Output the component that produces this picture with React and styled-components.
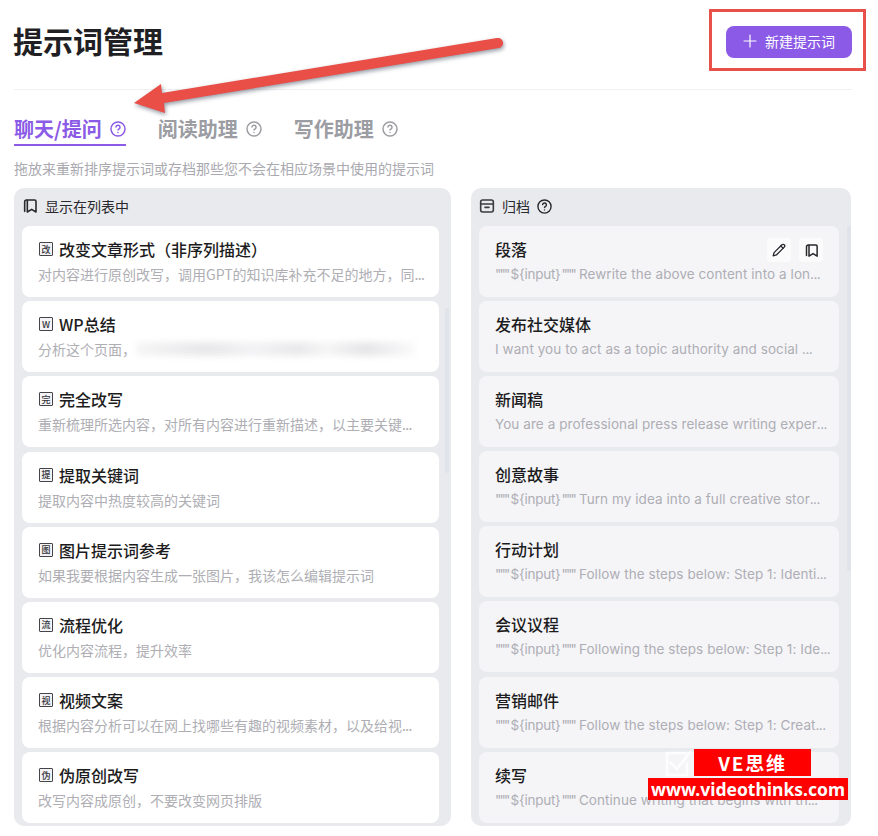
import React from "react";
import styled, { createGlobalStyle } from "styled-components";

const Global = createGlobalStyle`
  html, body { margin: 0; padding: 0; background: #fff; }
  body { width: 878px; height: 836px; overflow: hidden; font-family: "Noto Sans CJK SC", sans-serif; }
  * { box-sizing: border-box; }
`;
const CJK = `"Noto Sans CJK SC", sans-serif`;
const LATIN = `Inter, "Noto Sans CJK SC", sans-serif`;

const Page = styled.div`
  position: relative;
  width: 878px;
  height: 836px;
  padding: 0 26px 0 14px;
  overflow: hidden;
  font-family: ${CJK};
`;
const Header = styled.header`
  display: flex;
  align-items: center;
  justify-content: space-between;
  height: 90px;
  padding-top: 6px;
  padding-bottom: 11px;
  border-bottom: 1px solid #f0f0f2;
`;
const Title = styled.h1`
  margin: -4px 0 0 -1px;
  font-size: 30px;
  line-height: 40px;
  font-weight: 700;
  color: #1f1f24;
`;
const NewButton = styled.button`
  width: 126px;
  height: 32px;
  display: flex;
  align-items: center;
  justify-content: center;
  gap: 8px;
  border: 0;
  padding: 0 0 2px;
  border-radius: 8px;
  background: #8b5ae6;
  color: #fff;
  font-family: ${CJK};
  font-size: 14px;
`;
const Tabs = styled.nav`
  display: flex;
  gap: 32px;
  padding-top: 26px;
`;
const Tab = styled.div`
  display: flex;
  align-items: center;
  gap: 8px;
  height: 30px;
  padding-bottom: 3px;
  font-size: 20px;
  font-weight: 700;
  color: ${p => (p.$active ? "#8b5ae6" : "#9c9ca3")};
  border-bottom: 2px solid ${p => (p.$active ? "#8b5ae6" : "transparent")};
`;
const Hint = styled.p`
  margin: 13px 0 0;
  font-size: 14px;
  line-height: 18px;
  color: #a9a9af;
`;
const Columns = styled.div`
  display: grid;
  grid-template-columns: 437px 380px;
  gap: 20px;
  margin-top: 11px;
`;
const Panel = styled.section`
  position: relative;
  height: 638px;
  padding: 0 8px;
  border-radius: 10px;
  background: #e9eaee;
  overflow: hidden;
`;
const PanelHead = styled.div`
  display: flex;
  align-items: center;
  gap: 7px;
  height: 38px;
  padding-bottom: 2px;
  font-size: 14px;
  color: #28282d;
`;
const List = styled.div`
  display: flex;
  flex-direction: column;
  gap: ${p => p.$gap}px;
  width: ${p => p.$w}px;
`;
const Card = styled.article`
  position: relative;
  height: 71px;
  padding: 11px 16px 0;
  border-radius: 8px;
  background: ${p => (p.$muted ? "#f5f5f8" : "#fff")};
`;
const CardTitle = styled.div`
  display: flex;
  align-items: center;
  gap: 6px;
  height: 24px;
  font-size: 16px;
  font-weight: 500;
  color: #1c1c20;
`;
const CharIcon = styled.span`
  width: 14px;
  height: 14px;
  display: flex;
  align-items: center;
  justify-content: center;
  flex: none;
  margin-left: 1px;
  border: 1px solid #44444a;
  border-radius: 1px;
  background: #f4f4f6;
  font-size: 9px;
  line-height: 1;
  font-weight: 500;
  color: #33333a;
`;
const Desc = styled.div`
  display: flex;
  align-items: center;
  height: 22px;
  margin-top: 2px;
  font-size: 14px;
  color: #aeaeb4;
  white-space: nowrap;
`;
const LatinDesc = styled.span`
  font-family: ${LATIN};
  font-size: 13.5px;
  letter-spacing: 0.07px;
`;
const Quote = styled.span`
  letter-spacing: -1.8px;
`;
const InputVar = styled.span`
  letter-spacing: -0.25px;
  margin: 0 1px 0 2px;
`;
const Dots = styled.span`
  letter-spacing: -0.6px;
`;
const Redacted = styled.span`
  flex: none;
  width: 280px;
  height: 14px;
  background: linear-gradient(90deg, #f6f6f7 0%, #e8e8ea 25%, #f3f3f5 42%, #e9e9eb 58%, #f6f6f7 68%, #e6e6e8 82%, #fbfbfc 100%);
  filter: blur(3px);
`;
const CardActions = styled.div`
  position: absolute;
  top: 12px;
  right: 16px;
  display: flex;
  gap: 8px;
`;
const ActionBtn = styled.span`
  width: 24px;
  height: 24px;
  display: flex;
  align-items: center;
  justify-content: center;
  border-radius: 4px;
  background: #fbfbfc;
  color: #28282d;
`;
const ScrollThumb = styled.div`
  position: absolute;
  width: 4px;
  border-radius: 2px;
  background: #e0e3e9;
  right: ${p => p.$right}px;
  top: ${p => p.$top}px;
  height: ${p => p.$h}px;
`;
const RedFrame = styled.div`
  position: absolute;
  left: 709px;
  top: 9px;
  width: 157px;
  height: 62px;
  border: 3px solid #e8504a;
`;
const ArrowSvg = styled.svg`
  position: absolute;
  left: 120px;
  top: 25px;
  overflow: visible;
  filter: drop-shadow(1px 2px 2px rgba(60, 70, 90, 0.55));
`;
const Watermark = styled.div`
  position: absolute;
  left: 648px;
  top: 749px;
  width: 200px;
  height: 52px;
`;
const WmCheck = styled.svg`
  position: absolute;
  left: 17px;
  top: 0;
`;
const WmBrand = styled.div`
  position: absolute;
  left: 46px;
  top: 0;
  width: 117px;
  height: 27px;
  display: flex;
  align-items: center;
  justify-content: center;
  background: #fe0000;
  color: #fff;
  font-family: ${CJK};
  font-size: 19px;
  font-weight: 700;
  letter-spacing: 1.8px;
`;
const WmUrl = styled.div`
  position: absolute;
  left: 0;
  top: 29px;
  width: 200px;
  height: 22px;
  display: flex;
  align-items: center;
  justify-content: center;
  background: #fe0000;
  color: #fff;
  font-family: "Noto Sans", sans-serif;
  font-size: 17.5px;
  font-weight: 700;
  white-space: nowrap;
`;

const Help = ({ size = 16, sw = 2.2 }) => (
  <svg width={size} height={size} viewBox="0 0 24 24" fill="none" stroke="currentColor" strokeWidth={sw} strokeLinecap="round" strokeLinejoin="round">
    <circle cx="12" cy="12" r="10.5" />
    <path d="M9 9a3 3 0 0 1 6 .8c0 2-3 2.6-3 3.7" />
    <path d="M12 17.4h.01" />
  </svg>
);
const Copies = ({ size = 16 }) => (
  <svg width={size} height={size} viewBox="0 0 24 24" fill="none" stroke="currentColor" strokeWidth="2.4" strokeLinecap="round" strokeLinejoin="round">
    <path d="M8 3h11a2 2 0 0 1 2 2v16l-6.5-4L8 21V3" />
    <path d="M4 20V6a3 3 0 0 1 3-3" />
  </svg>
);
const Archive = () => (
  <svg width="16" height="16" viewBox="0 0 24 24" fill="none" stroke="#3a3a40" strokeWidth="2.4" strokeLinecap="round" strokeLinejoin="round">
    <rect x="2.5" y="3" width="19" height="18" rx="3" />
    <path d="M2.5 9h19" />
    <path d="M9 14h6" />
  </svg>
);
const Pencil = () => (
  <svg width="14" height="14" viewBox="0 0 24 24" fill="none" stroke="currentColor" strokeWidth="2.2" strokeLinecap="round" strokeLinejoin="round">
    <path d="M17 3a2.8 2.8 0 0 1 4 4L7.5 20.5 2 22l1.5-5.5Z" />
    <path d="m15 5 4 4" />
  </svg>
);
const Plus = () => (
  <svg width="14" height="14" viewBox="0 0 14 14" fill="none" stroke="#fff" strokeWidth="1.2" strokeLinecap="round">
    <path d="M7 1v12M1 7h12" />
  </svg>
);

const left = [
  { icon: "改", title: "改变文章形式（非序列描述）", desc: "对内容进行原创改写，调用GPT的知识库补充不足的地方，同", more: true },
  { icon: "W", title: "WP总结", desc: "分析这个页面，", redacted: true },
  { icon: "完", title: "完全改写", desc: "重新梳理所选内容，对所有内容进行重新描述，以主要关键", more: true },
  { icon: "提", title: "提取关键词", desc: "提取内容中热度较高的关键词" },
  { icon: "图", title: "图片提示词参考", desc: "如果我要根据内容生成一张图片，我该怎么编辑提示词" },
  { icon: "流", title: "流程优化", desc: "优化内容流程，提升效率" },
  { icon: "视", title: "视频文案", desc: "根据内容分析可以在网上找哪些有趣的视频素材，以及给视", more: true },
  { icon: "伪", title: "伪原创改写", desc: "改写内容成原创，不要改变网页排版" },
];
const right = [
  { title: "段落", desc: "Rewrite the above content into a lon", quoted: true },
  { title: "发布社交媒体", desc: "I want you to act as a topic authority and social " },
  { title: "新闻稿", desc: "You are a professional press release writing exper" },
  { title: "创意故事", desc: "Turn my idea into a full creative stor", quoted: true },
  { title: "行动计划", desc: "Follow the steps below: Step 1: Identi", quoted: true },
  { title: "会议议程", desc: "Following the steps below: Step 1: Ide", quoted: true },
  { title: "营销邮件", desc: "Follow the steps below: Step 1: Creat", quoted: true },
  { title: "续写", desc: "Continue writing that begins with th", quoted: true },
];
const QUOTES = '"""';

export default function App() {
  return (
    <Page>
      <Global />
      <Header>
        <Title>提示词管理</Title>
        <NewButton><Plus />新建提示词</NewButton>
      </Header>
      <Tabs>
        <Tab $active>聊天/提问<Help /></Tab>
        <Tab>阅读助理<Help /></Tab>
        <Tab>写作助理<Help /></Tab>
      </Tabs>
      <Hint>拖放来重新排序提示词或存档那些您不会在相应场景中使用的提示词</Hint>
      <Columns>
        <Panel>
          <PanelHead><Copies />显示在列表中</PanelHead>
          <List $w={417} $gap={4.2}>
            {left.map(item => (
              <Card key={item.title}>
                <CardTitle><CharIcon>{item.icon}</CharIcon>{item.title}</CardTitle>
                <Desc>
                  <span>{item.desc}{item.more && <Dots>...</Dots>}</span>
                  {item.redacted && <Redacted />}
                </Desc>
              </Card>
            ))}
          </List>
          <ScrollThumb $right={2} $top={120} $h={165} />
        </Panel>
        <Panel>
          <PanelHead><Archive />归档<Help size={15} /></PanelHead>
          <List $w={360} $gap={4.1}>
            {right.map((item, i) => (
              <Card key={item.title} $muted>
                <CardTitle>{item.title}</CardTitle>
                <Desc>
                  <LatinDesc>
                    {item.quoted && (
                      <>
                        <Quote>{QUOTES}</Quote>
                        <InputVar>{"${input}"}</InputVar>
                        <Quote>{QUOTES}</Quote>{" "}
                      </>
                    )}
                    {item.desc}<Dots>...</Dots>
                  </LatinDesc>
                </Desc>
                {i === 0 && (
                  <CardActions>
                    <ActionBtn><Pencil /></ActionBtn>
                    <ActionBtn><Copies size={15} /></ActionBtn>
                  </CardActions>
                )}
              </Card>
            ))}
          </List>
          <ScrollThumb $right={0} $top={38} $h={345} />
        </Panel>
      </Columns>

      <ArrowSvg width="390" height="95" viewBox="0 0 390 95">
        <path d="M14 78 L41 59 L42 68 L377 13 A5 5 0 0 1 379 23 L44 78 L45 88 Z" fill="#e94e47" />
      </ArrowSvg>
      <RedFrame />
      <Watermark>
        <WmCheck width="30" height="28" viewBox="0 0 30 28" fill="none" stroke="#fff" strokeWidth="2.5" opacity="0.85">
          <path d="M22 4H2v22h20V13" />
          <path d="M5 13l7 7L26 2" />
        </WmCheck>
        <WmBrand>VE思维</WmBrand>
        <WmUrl>www.videothinks.com</WmUrl>
      </Watermark>
    </Page>
  );
}
